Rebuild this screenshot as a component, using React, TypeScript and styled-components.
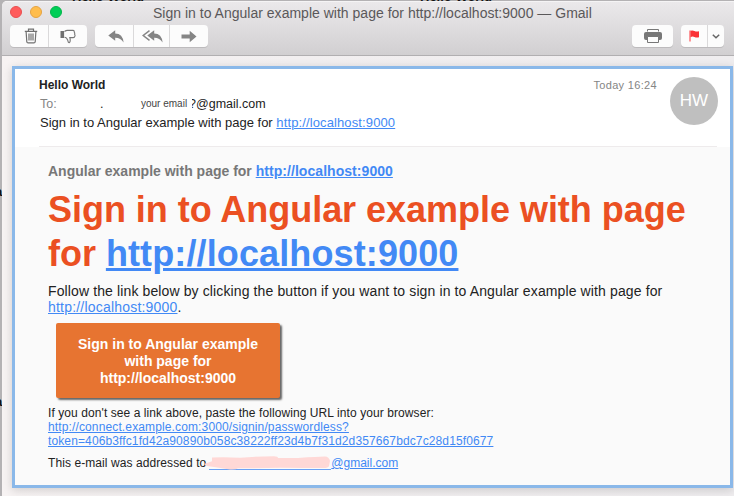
import React from "react";
import styled, { createGlobalStyle } from "styled-components";

const Global = createGlobalStyle`
  *, *::before, *::after { box-sizing: border-box; }
  html, body { margin: 0; height: 496px; overflow: hidden; }
  body { font-family: "Liberation Sans", Arial, sans-serif; color: #222; background: #a9a8aa; }
  p, h1 { margin: 0; }
`;

const Desktop = styled.div`
  position: relative;
  width: 734px;
  height: 496px;
  padding-left: 2px;
  overflow: hidden;
  background: #b4b2b4;
`;

const Behind = styled.span<{ $x: number; $y: number }>`
  position: absolute;
  left: ${(p) => p.$x}px;
  top: ${(p) => p.$y}px;
  font: bold 13px/14px "Liberation Sans", Arial, sans-serif;
  color: #111;
  white-space: nowrap;
`;

const Window = styled.main`
  position: relative;
  height: 496px;
  display: flex;
  flex-direction: column;
  background: linear-gradient(90deg, #f7f3f3, #f2eff0 40%, #efedef);
  border-radius: 5px 0 0 0;
  margin-top: 1px;
  overflow: hidden;
`;

const TitleBar = styled.header`
  flex: none;
  height: 55px;
  background: linear-gradient(#ebe9eb, #d1cfd1);
  border-top: 1px solid #f5f4f5;
  border-bottom: 1px solid #b1afb1;
`;

const TitleRow = styled.div`
  display: flex;
  align-items: center;
  height: 20px;
  padding-left: 8px;
`;

const Lights = styled.div`
  display: flex;
  gap: 8px;
  width: 143px;
`;

const Light = styled.i<{ $fill: string; $edge: string }>`
  width: 12px;
  height: 12px;
  border-radius: 50%;
  background: ${(p) => p.$fill};
  border: 1px solid ${(p) => p.$edge};
`;

const Title = styled.span`
  padding-top: 1px;
  font-size: 14px;
  letter-spacing: 0.01px;
  line-height: 20px;
  color: #5a585a;
  white-space: nowrap;
`;

const Toolbar = styled.div`
  display: flex;
  padding: 3px 10px 0 8px;
`;

const Group = styled.div<{ $gap: number; $push?: boolean }>`
  display: flex;
  height: 22px;
  margin-right: ${(p) => p.$gap}px;
  margin-left: ${(p) => (p.$push ? "auto" : "0")};
  border-radius: 4px;
  background: #fcfcfc;
  box-shadow: 0 1px 0 #bdbbbd;
`;

const Tool = styled.button<{ $w: number; $nudge?: number }>`
  display: grid;
  place-items: center;
  width: ${(p) => p.$w}px;
  padding: 0 0 0 ${(p) => (p.$nudge ?? 0) * 2}px;
  border: 0;
  background: none;
  color: #858585;
  & + & { border-left: 1px solid #dad9da; }
  svg { display: block; }
`;

const Card = styled.article`
  width: 721px;
  height: 422px;
  margin: 10px 0 0 10px;
  border: 3px solid #8ab8e9;
  background: #fafafa;
  box-shadow: 0 2px 9px rgba(0, 0, 0, 0.16);
`;

const MailHead = styled.section`
  display: flex;
  justify-content: space-between;
  height: 78px;
  padding: 8px 12px 0 24px;
  background: #fff;
`;

const HeadText = styled.div`
  white-space: nowrap;
`;

const Sender = styled.p`
  font-weight: bold;
  font-size: 12px;
  line-height: 17px;
`;

const Recipient = styled.p`
  display: flex;
  padding-left: 1px;
  font-size: 12.5px;
  line-height: 20px;
`;

const ToLabel = styled.span`
  width: 60px;
  color: #858585;
`;

const Dot = styled.span`
  width: 41px;
`;

const Alias = styled.span`
  width: 51px;
  font-size: 10px;
  color: #444;
`;

const Clipped = styled.span`
  width: 4px;
  overflow: hidden;
  height: 14px;
  direction: rtl;
`;

const Subject = styled.p`
  padding-left: 1px;
  font-size: 13px;
  line-height: 18px;
`;

const Link = styled.a<{ $track?: number }>`
  color: #4289f5;
  text-decoration: underline;
  letter-spacing: ${(p) => p.$track ?? 0}px;
`;

const HeadSide = styled.div`
  display: flex;
  gap: 13px;
`;

const Time = styled.time`
  font-size: 11px;
  letter-spacing: 0.33px;
  line-height: 17px;
  color: #858585;
`;

const Avatar = styled.div`
  display: grid;
  place-items: center;
  width: 48px;
  height: 48px;
  border-radius: 50%;
  background: #bfbfbf;
  color: #fff;
  font-size: 17px;
`;

const Rule = styled.hr`
  width: 678px;
  height: 1px;
  margin: -1px 0 0 24px;
  border: 0;
  background: #eeebec;
`;

const MailBody = styled.section`
  padding: 15px 0 0 33px;
  white-space: nowrap;
`;

const Preheader = styled.p`
  font-weight: bold;
  font-size: 14px;
  line-height: 18px;
  color: #777;
`;

const Headline = styled.h1`
  margin-top: 8px;
  font-size: 36px;
  letter-spacing: -0.03px;
  line-height: 44px;
  color: #eb5022;
`;

const Copy = styled.p`
  margin-top: 7px;
  font-size: 14px;
  letter-spacing: 0.12px;
  line-height: 16px;
`;

const Cta = styled.button`
  display: block;
  width: 224px;
  height: 75px;
  margin: 8px 0 0 8px;
  padding: 2px 0 0;
  border: 0;
  border-radius: 2px;
  background: #e77431;
  box-shadow: 2px 2px 2px #666;
  color: #fff;
  font: bold 14px/17px "Liberation Sans", Arial, sans-serif;
`;

const Small = styled.p<{ $top: number }>`
  margin-top: ${(p) => p.$top}px;
  font-size: 12px;
  letter-spacing: 0.08px;
  line-height: 14px;
`;

const Redacted = styled.a`
  position: relative;
  display: inline-block;
  width: 122px;
  height: 13px;
  margin-left: 3px;
  vertical-align: bottom;
  border-bottom: 1px solid #6ca2f5;
  svg { position: absolute; left: -5px; top: -1px; }
`;

const TrashIcon = () => (
  <svg width="14" height="16" viewBox="0 0 14 16" fill="none" stroke="#707070" strokeWidth="1.200">
    <path d="M.8 3.3h12.4M4.5 3V1.200h5V3M2.100 3.500l.7 10.200q.1 1.200 1.300 1.200h5.800q1.200 0 1.300-1.200l.7-10.200M5 5.500v7M7 5.500v7M9 5.500v7" />
  </svg>
);

const JunkIcon = () => (
  <svg width="16" height="15" viewBox="0 0 16 15">
    <path d="M.5 2h3.600v7H.5z" fill="#707070" />
    <path
      d="M4.500 2.500Q6 1.400 7.500 1.400H13Q14.500 1.400 14.200 3 15 4 14.600 5.200 15.400 6.300 14.800 7.300 14.600 8.600 13.200 8.600H9.800Q10.500 10.800 10 12.800 9.300 14.200 8.300 13.200 7.900 10.800 6.500 9.200 5.500 8.300 4.500 8.300"
      fill="none"
      stroke="#777"
      strokeWidth="1.100"
    />
  </svg>
);

const ReplyIcon = () => (
  <svg width="16" height="13" viewBox="0 0 16 13" fill="currentColor">
    <path d="M.3 5.500 7.200.3v3.200Q14.800 3.500 15.600 12.600 12.700 7.600 7.200 7.700v3.100z" />
  </svg>
);

const ReplyAllIcon = () => (
  <svg width="21" height="13" viewBox="0 0 21 13" fill="currentColor">
    <path d="M5.300 5.500 12.200.3v3.200Q19.800 3.500 20.600 12.600 17.700 7.600 12.200 7.700v3.100z" />
    <path d="M7.500.7 1.200 5.500l6.300 4.900" fill="none" stroke="currentColor" strokeWidth="1.500" />
  </svg>
);

const ForwardIcon = () => (
  <svg width="16" height="13" viewBox="0 0 16 13" fill="currentColor">
    <path d="M.5 4.500h8.200V.7l6.800 5.800-6.800 5.800V8.500H.5z" />
  </svg>
);

const PrintIcon = () => (
  <svg width="18" height="15" viewBox="0 0 18 15">
    <path d="M3.500 2.500v-2h11v2" fill="none" stroke="#777" />
    <path d="M2 3h14q2 0 2 2v4q0 2-2 2H2q-2 0-2-2V5q0-2 2-2z" fill="#777" />
    <path d="M3.500 7.500h11v6h-11z" fill="#fcfcfc" stroke="#777" />
  </svg>
);

const FlagIcon = () => (
  <svg width="11" height="12" viewBox="0 0 11 12" fill="#fb3236">
    <path d="M.5.500h1v11h-1z" />
    <path d="M1.500.8q2-.8 4 .2t4.500.2v6q-2.500.8-4.500-.2t-4 .2z" />
  </svg>
);

const ChevronIcon = () => (
  <svg width="8" height="5" viewBox="0 0 8 5" fill="none" stroke="#666" strokeWidth="1.500">
    <path d="m.8.800 3.200 3L7.200.8" />
  </svg>
);

const Smudge = () => (
  <svg width="128" height="15" viewBox="0 0 128 15">
    <path d="M0 8 8 5.200 8 1.500q12-.8 28 .200 18-1.500 34-1.500 4 0 4 1.800h20q20-1.500 27-1.500 4 0 5 4.500l-1 5q-1 2-5 2H98q-30-.5-51 .3H34q-2 1.500-8 1.200L10 11 3 10z" fill="#ffd8d6" />
  </svg>
);

const HOST = "http://localhost:9000";

export default function App() {
  return (
    <>
      <Global />
      <Desktop>
        <Behind $x={72} $y={-10}>Hello World</Behind>
        <Behind $x={420} $y={-10}>Hello World</Behind>
        <Behind $x={-5} $y={185}>a</Behind>
        <Behind $x={-5} $y={395}>a</Behind>
        <Window>
          <TitleBar>
            <TitleRow>
              <Lights>
                <Light $fill="#ff5c5c" $edge="#e84f50" />
                <Light $fill="#ffbd4c" $edge="#e4a343" />
                <Light $fill="#00ce56" $edge="#00b44a" />
              </Lights>
              <Title>Sign in to Angular example with page for {HOST} — Gmail</Title>
            </TitleRow>
            <Toolbar>
              <Group $gap={8}>
                <Tool $w={38} $nudge={1.5}><TrashIcon /></Tool>
                <Tool $w={39} $nudge={-0}><JunkIcon /></Tool>
              </Group>
              <Group $gap={0}>
                <Tool $w={38} $nudge={2}><ReplyIcon /></Tool>
                <Tool $w={36} $nudge={0.5}><ReplyAllIcon /></Tool>
                <Tool $w={39}><ForwardIcon /></Tool>
              </Group>
              <Group $gap={8} $push>
                <Tool $w={41}><PrintIcon /></Tool>
              </Group>
              <Group $gap={0}>
                <Tool $w={26}><FlagIcon /></Tool>
                <Tool $w={17}><ChevronIcon /></Tool>
              </Group>
            </Toolbar>
          </TitleBar>
          <Card>
            <MailHead>
              <HeadText>
                <Sender>Hello World</Sender>
                <Recipient>
                  <ToLabel>To:</ToLabel>
                  <Dot>.</Dot>
                  <Alias>your email</Alias>
                  <Clipped>?</Clipped>
                  <span>@gmail.com</span>
                </Recipient>
                <Subject>
                  Sign in to Angular example with page for <Link $track={0.12}>{HOST}</Link>
                </Subject>
              </HeadText>
              <HeadSide>
                <Time>Today 16:24</Time>
                <Avatar>HW</Avatar>
              </HeadSide>
            </MailHead>
            <Rule />
            <MailBody>
              <Preheader>
                Angular example with page for <Link $track={0.05}>{HOST}</Link>
              </Preheader>
              <Headline>
                Sign in to Angular example with page
                <br />
                for <Link $track={0.12}>{HOST}</Link>
              </Headline>
              <Copy>
                Follow the link below by clicking the button if you want to sign in to Angular example with page for
                <br />
                <Link $track={0.2}>{HOST}</Link>.
              </Copy>
              <Cta>
                Sign in to Angular example
                <br />
                with page for
                <br />
                {HOST}
              </Cta>
              <Small $top={8}>
                If you don't see a link above, paste the following URL into your browser:
                <br />
                <Link $track={0.13}>http://connect.example.com:3000/signin/passwordless?</Link>
                <br />
                <Link $track={0.12}>token=406b3ffc1fd42a90890b058c38222ff23d4b7f31d2d357667bdc7c28d15f0677</Link>
              </Small>
              <Small $top={8}>
                This e-mail was addressed to
                <Redacted><Smudge /></Redacted>
                <Link>@gmail.com</Link>
              </Small>
            </MailBody>
          </Card>
        </Window>
      </Desktop>
    </>
  );
}
